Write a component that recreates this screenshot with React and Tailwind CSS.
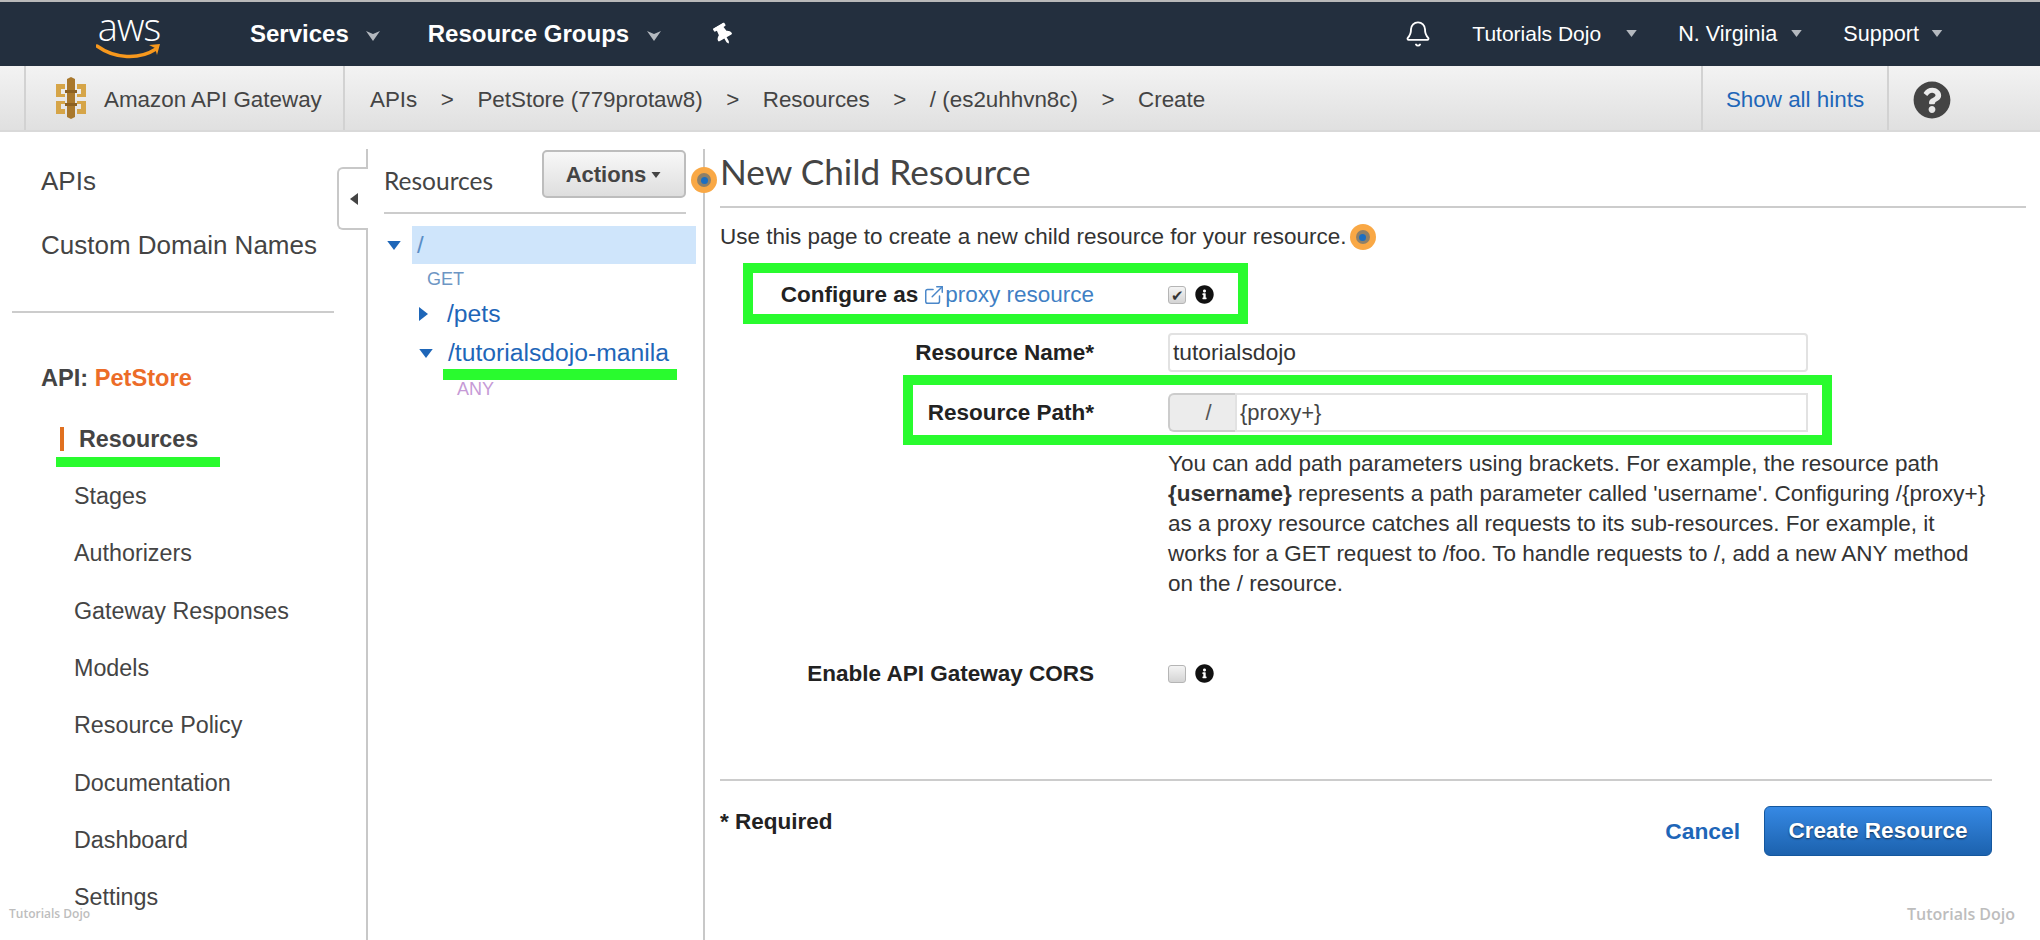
import { Bell, ExternalLink } from "lucide-react";
import { FaThumbtack, FaInfoCircle, FaQuestionCircle } from "react-icons/fa";

const navItems = ["Stages", "Authorizers", "Gateway Responses", "Models", "Resource Policy", "Documentation", "Dashboard", "Settings"];
const crumbs = ["APIs", "PetStore (779protaw8)", "Resources", "/ (es2uhhvn8c)", "Create"];

function Caret({ className = "" }) {
  return (
    <svg width="12" height="8" viewBox="0 0 12 8" className={`shrink-0 ${className}`}>
      <path d="M0 0h12L6 8z" fill="currentColor" />
    </svg>
  );
}

function NavChevron({ className = "" }) {
  return (
    <svg width="14" height="10" viewBox="0 0 14 10" className={className}>
      <path d="M0 0l7 3 7-3-7 10z" fill="currentColor" />
    </svg>
  );
}

function HintDot({ className = "" }) {
  return (
    <span className={`flex h-[26px] w-[26px] items-center justify-center rounded-full bg-[#f9a845] ${className}`}>
      <span className="flex h-[14px] w-[14px] items-center justify-center rounded-full bg-[#8f8068]">
        <span className="h-[7px] w-[7px] rounded-full bg-[#1b6ec2]" />
      </span>
    </span>
  );
}

function FakeCheck({ checked }) {
  return (
    <span className="flex h-[18px] w-[18px] items-center justify-center rounded-[3px] border border-[#b5b5b5] bg-gradient-to-b from-[#f4f4f4] to-[#d4d4d4] text-[15px] leading-none text-[#333]">
      {checked ? "✔" : ""}
    </span>
  );
}

export default function App() {
  return (
    <div className="relative h-[940px] w-[2040px] overflow-hidden bg-white font-['Liberation_Sans',Arial,sans-serif] text-[#444]">
      {/* ── Top bar ── */}
      <header className="flex h-[66px] items-center border-t-2 border-[#b9b9b9] bg-[#232f3e] text-white">
        <div className="ml-[96px] mt-[2px] flex w-[66px] flex-col items-center">
          <span className="font-['Open_Sans',sans-serif] text-[38px] leading-[34px] font-light tracking-[-1px]">aws</span>
          <svg width="66" height="20" viewBox="0 0 66 20" className="-mt-[1px]">
            <path d="M1 4c18 13 42 14 59 3" fill="none" stroke="#f7981d" strokeWidth="3.4" strokeLinecap="round" />
            <path d="M53 3l11-1-3 11-2-7z" fill="#f7981d" />
          </svg>
        </div>
        <span className="ml-[88px] text-[24px] font-bold">Services</span>
        <NavChevron className="ml-[17px] mt-[3px] text-[#b4b9bf]" />
        <span className="ml-[48px] text-[24px] font-bold">Resource Groups</span>
        <NavChevron className="ml-[18px] mt-[3px] text-[#b4b9bf]" />
        <FaThumbtack className="ml-[52px] -rotate-[30deg] text-[21px]" />
        <div className="ml-auto flex items-center pr-[97px]">
          <Bell size={28} strokeWidth={1.6} />
          <span className="ml-[40px] text-[21px]">Tutorials Dojo</span>
          <Caret className="ml-[25px] h-[7px] w-[11px] text-[#b4b9bf]" />
          <span className="ml-[41px] text-[21.6px]">N. Virginia</span>
          <Caret className="ml-[14px] h-[7px] w-[11px] text-[#b4b9bf]" />
          <span className="ml-[41px] text-[21.6px]">Support</span>
          <Caret className="ml-[12px] h-[7px] w-[12px] text-[#b4b9bf]" />
        </div>
      </header>

      {/* ── Breadcrumb bar ── */}
      <div className="flex h-[66px] items-stretch border-b-2 border-[#d9d9d9] bg-gradient-to-b from-[#f3f3f3] to-[#e0e0e0] text-[22.4px]">
        <div className="ml-[24px] flex w-[321px] items-center border-x-2 border-[#d2d2d2] pl-[27px]">
          <svg width="36" height="42" viewBox="0 0 36 42">
            <path d="M3 7h9v5H8v5h4v3H3zM24 7h9v13h-9v-3h4v-5h-4zM3 24h9v3H8v5h4v5H3zM24 24h9v13h-9v-5h4v-5h-4z" fill="#d6a548" />
            <path d="M14 2l4-2 4 2v38l-4 2-4-2z" fill="#a9782c" />
            <path d="M12 13h12v3H12zM12 26h12v3H12z" fill="#8c6122" />
          </svg>
          <span className="ml-[15px] mt-[4px] whitespace-nowrap">Amazon API Gateway</span>
        </div>
        <nav className="mt-[4px] flex flex-1 items-center pl-[25px]">
          {crumbs.map((c, i) => (
            <span key={c} className="flex items-center whitespace-nowrap">
              {i > 0 && <span className="mx-[23.5px]">&gt;</span>}
              {c}
            </span>
          ))}
        </nav>
        <div className="flex w-[188px] items-center justify-center border-x-2 border-[#d2d2d2] pt-[4px] text-[#1e66b8]">Show all hints</div>
        <div className="flex w-[89px] items-center pl-[24px] pt-[3px] text-[#444]">
          <FaQuestionCircle className="text-[38px]" />
        </div>
        <div className="w-[62px]" />
      </div>

      <div className="flex h-[808px]">
        {/* ── Left nav ── */}
        <aside className="h-full w-[368px] pt-[17px]">
          <div className="relative h-full border-r-2 border-[#c8c8c8] text-[26px]">
            <div className="flex h-16 items-center pl-[41px]">APIs</div>
            <div className="flex h-16 items-center pl-[41px]">Custom Domain Names</div>
            <div className="mx-[12px] mt-[34px] w-[322px] border-t-2 border-[#cccccc]" />
            <div className="mt-[46px] flex h-10 items-center pl-[41px] text-[23.6px] font-bold">
              API:&nbsp;<span className="text-[#ec6c28]">PetStore</span>
            </div>
            <div className="mt-[20px] ml-[60px] flex h-10 items-center">
              <span className="h-[24px] w-[4px] bg-[#e07020]" />
              <span className="ml-[15px] text-[23.3px] font-bold">Resources</span>
            </div>
            <ul className="mt-[9px] pl-[74px] text-[23.3px]">
              {navItems.map((n) => (
                <li key={n} className="flex h-[57.3px] items-center">{n}</li>
              ))}
            </ul>
            {/* collapse tab */}
            <button className="absolute -right-[2px] top-[18px] flex h-[63px] w-[31px] items-center justify-center rounded-l-[6px] border-2 border-r-0 border-[#c8c8c8] bg-white">
              <svg width="8" height="12" viewBox="0 0 8 12"><path d="M8 0v12L0 6z" fill="#444" /></svg>
            </button>
          </div>
        </aside>

        {/* ── Resources tree ── */}
        <section className="h-full w-[337px] pt-[17px]">
          <div className="relative h-full border-r-2 border-[#c8c8c8] pl-[16px] pr-[17px]">
            <div className="flex h-[65px] items-center justify-between border-b-2 border-[#cccccc] pb-[2px]">
              <span className="mt-[3px] font-['Lato',sans-serif] text-[24.5px]">Resources</span>
              <button className="-mt-[12px] flex h-[48px] w-[144px] items-center justify-center rounded-[5px] border-2 border-[#bdbdbd] bg-gradient-to-b from-[#f8f8f8] to-[#dedede] pt-[2px] text-[22px] font-bold">
                Actions
                <Caret className="ml-[4px] h-[6px] w-[12px]" />
              </button>
            </div>
            <div className="mt-[12px] flex">
              <Caret className="ml-[3px] mr-[11px] mt-[15px] h-[9px] w-[14px] text-[#1e66b8]" />
              <div className="flex h-[38px] w-[284px] shrink-0 items-center bg-[#cfe5fb] pl-[5px] text-[24px] text-[#5a8ec6]">/</div>
            </div>
            <div className="mt-[4px] ml-[43px] text-[18px] leading-[22px] text-[#6d96c4]">GET</div>
            <div className="mt-[9px] flex h-[30px] items-center text-[24.7px] text-[#1e66b8]">
              <svg width="9" height="14" viewBox="0 0 9 14" className="ml-[35px] mr-[19px]"><path d="M0 0l9 7-9 7z" fill="currentColor" /></svg>
              /pets
            </div>
            <div className="mt-[9px] flex h-[30px] items-center text-[24.7px] text-[#1e66b8]">
              <Caret className="ml-[35px] mr-[15px] h-[9px] w-[14px]" />
              /tutorialsdojo-manila
            </div>
            <div className="mt-[10px] ml-[73px] text-[18px] leading-[22px] text-[#c69ad6]">ANY</div>
            <HintDot className="absolute -right-[14px] top-[18px]" />
          </div>
        </section>

        {/* ── Form ── */}
        <main className="relative h-full flex-1 pl-[15px] pt-[17px]">
          <h1 className="mr-[14px] h-[59px] border-b-2 border-[#cccccc] font-['Lato',sans-serif] text-[35.2px] leading-[45px]">New Child Resource</h1>
          <p className="mt-[15px] flex h-[28px] items-center text-[22.5px] text-[#333]">
            Use this page to create a new child resource for your resource.
            <HintDot className="ml-[3px]" />
          </p>
          <div className="mt-[29px] flex h-[30px] items-center text-[22.5px]">
            <div className="flex w-[374px] items-center justify-end whitespace-nowrap">
              <b className="text-[#222]">Configure as</b>
              <ExternalLink size={22} strokeWidth={1.6} className="ml-[5px] text-[#4a87c9]" />
              <span className="text-[#3f7fc4]">proxy resource</span>
            </div>
            <span className="ml-[74px]"><FakeCheck checked /></span>
            <FaInfoCircle className="ml-[9px] -mt-[2px] text-[19px] text-[#111]" />
          </div>
          <div className="mt-[23px] flex items-center text-[22.5px]">
            <b className="w-[374px] text-right text-[#222]">Resource Name*</b>
            <div className="ml-[74px] flex h-[39px] w-[640px] items-center rounded-[4px] border-2 border-[#e2e2e2] pl-[3px] text-[22.8px] text-[#333]">tutorialsdojo</div>
          </div>
          <div className="mt-[21px] flex items-center text-[22.5px]">
            <b className="w-[374px] text-right text-[#222]">Resource Path*</b>
            <div className="ml-[74px] flex h-[39px] w-[640px] text-[22px]">
              <div className="flex w-[67px] items-center justify-center rounded-l-[6px] border-2 border-r-0 border-[#cccccc] bg-[#ececec] pl-[12px] text-[#555]">/</div>
              <div className="flex flex-1 items-center border-2 border-[#e2e2e2] pl-[3px] text-[#444]">{"{proxy+}"}</div>
            </div>
          </div>
          <p className="ml-[448px] mt-[17px] w-[826px] text-[22.5px] leading-[30px] text-[#333]">
            You can add path parameters using brackets. For example, the resource path <b>{"{username}"}</b> represents a path parameter called 'username'. Configuring /{"{proxy+}"} as a proxy resource catches all requests to its sub-resources. For example, it works for a GET request to /foo. To handle requests to /, add a new ANY method on the / resource.
          </p>
          <div className="mt-[60px] flex h-[30px] items-center text-[22.5px]">
            <b className="w-[374px] text-right text-[#222]">Enable API Gateway CORS</b>
            <span className="ml-[74px]"><FakeCheck /></span>
            <FaInfoCircle className="ml-[9px] -mt-[2px] text-[19px] text-[#111]" />
          </div>
          <div className="mr-[48px] mt-[90px] border-t-2 border-[#cccccc]" />
          <div className="mr-[48px] mt-[25px] flex items-start justify-between">
            <b className="-mt-[1px] text-[22.5px] text-[#222]">* Required</b>
            <div className="flex items-center">
              <a className="text-[22.8px] font-bold text-[#1e66b8]">Cancel</a>
              <button className="ml-[24px] flex h-[50px] w-[228px] items-center justify-center rounded-[6px] border border-[#14579e] bg-gradient-to-b from-[#3689e4] to-[#1c62ae] text-[22.5px] font-bold text-white [text-shadow:0_1px_2px_rgba(0,0,0,0.6)]">
                Create Resource
              </button>
            </div>
          </div>
        </main>
      </div>

      {/* ── Green annotations drawn over the page ── */}
      <div className="absolute left-[743px] top-[263px] h-[61px] w-[505px] border-10 border-[#29fb2e]" />
      <div className="absolute left-[903px] top-[375px] h-[70px] w-[929px] border-10 border-[#29fb2e]" />
      <div className="absolute left-[443px] top-[369px] h-[11px] w-[234px] bg-[#29fb2e]" />
      <div className="absolute left-[56px] top-[457px] h-[10px] w-[164px] bg-[#29fb2e]" />

      {/* ── Watermarks ── */}
      <span className="absolute left-[9px] top-[905px] font-['Open_Sans',sans-serif] text-[12px] font-semibold text-[#bdbdbd]">Tutorials Dojo</span>
      <span className="absolute left-[1907px] top-[902px] font-['Open_Sans',sans-serif] text-[16px] font-semibold text-[#bdbdbd]">Tutorials Dojo</span>
    </div>
  );
}
